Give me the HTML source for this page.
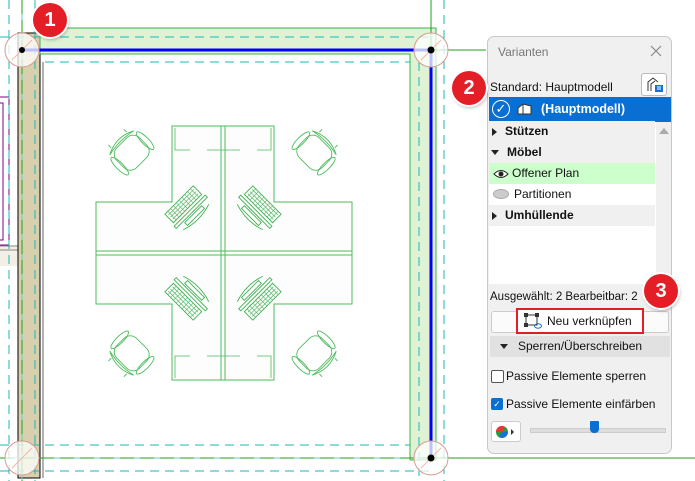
<!DOCTYPE html>
<html><head><meta charset="utf-8"><style>
body{margin:0;width:695px;height:481px;overflow:hidden;background:#fff;font-family:"Liberation Sans",sans-serif;position:relative}
.p{position:absolute}
.panel{left:487px;top:36px;width:185px;height:418px;background:#f0f0f0;border:1px solid #c8c8c8;border-radius:7px;box-sizing:border-box;font-size:12px;color:#111}
.row{position:absolute;left:1px;width:166px;height:21px;line-height:21px}
.b{font-weight:bold}
.tri{display:inline-block;width:0;height:0;border-top:4px solid transparent;border-bottom:4px solid transparent;border-left:5px solid #222;margin:0 8px 0 3px;vertical-align:-1px}
.trid{display:inline-block;width:0;height:0;border-left:4px solid transparent;border-right:4px solid transparent;border-top:5px solid #222;margin:0 8px 0 2px;vertical-align:1px}
.badge{position:absolute;width:34px;height:34px;border-radius:50%;background:#e41e26;color:#fff;font-weight:bold;font-size:20px;text-align:center;line-height:34px;box-shadow:0 0 0 2px #fff,1px 2px 4px rgba(0,0,0,.4)}
</style></head><body>
<svg class="p" style="left:0;top:0" width="695" height="481">
<defs>
<g id="chair" fill="none" stroke="#4cbb5c" stroke-width="0.9">
<rect x="-16" y="-13" width="32" height="28" rx="9"/>
<path d="M-17 -13Q0 -22 17 -13Q0 -17 -17 -13Z"/>
<ellipse cx="-18" cy="2" rx="3.5" ry="12"/><ellipse cx="18" cy="2" rx="3.5" ry="12"/>
<line x1="-11" y1="-17" x2="-11" y2="-21"/><line x1="11" y1="-17" x2="11" y2="-21"/>
</g>
<g id="pc" fill="none" stroke="#3fb050" stroke-width="0.9">
<rect x="-20" y="-7" width="40" height="12"/>
<path d="M-18 -4H18M-18 -1H18M-18 2H18" stroke-width="0.6"/>
<path d="M-16 -7V5M-12 -7V5M-8 -7V5M-4 -7V5M0 -7V5M4 -7V5M8 -7V5M12 -7V5M16 -7V5" stroke-width="0.5"/>
<rect x="-22" y="8" width="44" height="3"/>
<rect x="-12" y="13" width="24" height="4"/>
<path d="M-18 17Q0 23 18 17"/>
</g>
<g id="q">
<use href="#chair" transform="translate(131,152) rotate(-45)"/>
<use href="#pc" transform="translate(184,205) rotate(-45)"/>
</g>
</defs>
<rect x="0" y="246" width="18" height="20" fill="#f3efe6"/>
<path d="M0 97H9V245H0M0 103H3V240H0" fill="none" stroke="#800080" stroke-width="1"/>
<path d="M0 246H18M0 250H18" stroke="#888" stroke-width="1"/>
<rect x="18" y="33" width="22" height="445" fill="#d8d0ac" stroke="#000" stroke-width="1"/>
<line x1="43" y1="62" x2="43" y2="478" stroke="#666" stroke-width="1"/>
<path d="M40 28H436V460H410V54H40Z" fill="#dff2d4" stroke="#3cb24c" stroke-width="1"/>
<g stroke="#19b8b8" stroke-width="1" stroke-dasharray="9,6" fill="none">
<path d="M0 37H430M45 62H410M0 445H410M0 471H430M9 0V481M35 0V481M419 62V481M444 0V481"/>
</g>
<g stroke="#6cc" stroke-width="1"><path d="M22 0V481M0 458H430"/></g>
<g stroke="#1aa31a" stroke-width="1"><path d="M22 0V481M0 458H430" stroke-dasharray="14,6"/><path d="M431 0V50M431 50H486M431 458H695"/></g>
<g fill="#fdfdfd" stroke="#4cbb5c" stroke-width="1">
<path d="M172 126H274V202H352V304H274V380H172V304H96V202H172Z"/>
<path d="M221 126V380M225 126V380M96 251H352M96 255H352" fill="none"/>
<path d="M175 128V150H190M207 150H240M257 150H271V128M175 378V356H190M207 356H240M257 356H271V378" fill="none" stroke-width="0.8"/>
</g>
<use href="#q"/>
<use href="#q" transform="translate(446,0) scale(-1,1)"/>
<use href="#q" transform="translate(0,506) scale(1,-1)"/>
<use href="#q" transform="translate(446,506) scale(-1,-1)"/>
<path d="M22 50H431V458" fill="none" stroke="#0000ff" stroke-width="3"/>
<g fill="rgba(255,255,255,.75)" stroke="#d89c90" stroke-width="1">
<circle cx="22" cy="50" r="17"/><circle cx="431" cy="50" r="17"/><circle cx="22" cy="458" r="17"/><circle cx="431" cy="458" r="17"/>
</g>
<g stroke="#f0b8a8" stroke-width="1"><path d="M12 60L32 40M421 60L441 40M12 468L32 448M421 468L441 448"/></g>
<circle cx="22" cy="50" r="3" fill="#000"/><circle cx="431" cy="50" r="3.5" fill="#000"/><circle cx="431" cy="458" r="3.5" fill="#000"/>
</svg>

<div class="panel p">
<div class="p" style="left:10px;top:8px;color:#777;font-size:12px">Varianten</div>
<svg class="p" style="right:9px;top:8px" width="12" height="12"><path d="M1 1L11 11M11 1L1 11" stroke="#888" stroke-width="1.2"/></svg>
<div class="p" style="left:2px;top:43px;font-size:12px">Standard: Hauptmodell</div>
<div class="p" style="left:153px;top:36px;width:24px;height:21px;background:#fff;border:1px solid #bbb;border-radius:3px"><svg width="24" height="21"><path d="M6 17V8l5-4 5 4M9 17V10l4-3" fill="none" stroke="#333"/><rect x="13" y="11" width="8" height="7" fill="#1d6fd6"/><path d="M15 13h4M15 15h4" stroke="#fff"/></svg></div>
<div class="p" style="left:1px;top:60px;width:182px;height:25px;background:#0a6fd2;color:#fff">
<div class="p" style="left:3px;top:3px;width:16px;height:16px;border:1.5px solid #fff;border-radius:50%;font-size:13px;line-height:16px;text-align:center">✓</div>
<svg class="p" style="left:28px;top:6px" width="16" height="12"><path d="M1 11V5l5-4 8 2v8zM6 1v10" fill="#fff" stroke="#333" stroke-width="1"/></svg>
<div class="p b" style="left:52px;top:5px;font-size:12.5px">(Hauptmodell)</div>
</div>
<div class="p" style="left:1px;top:85px;width:167px;height:162px;background:#fff"></div>
<div class="p" style="left:168px;top:85px;width:15px;height:162px;background:#f0f0f0"><div style="margin:6px 0 0 3px;width:0;height:0;border-left:5px solid transparent;border-right:5px solid transparent;border-bottom:6px solid #aaa"></div></div>
<div class="row b" style="top:84px;background:#f0f0f0"><span class="tri"></span>Stützen</div>
<div class="row b" style="top:105px;background:#f0f0f0"><span class="trid"></span>Möbel</div>
<div class="row" style="top:126px;background:#ccffcc"><svg style="margin:0 3px 0 4px;vertical-align:-2px" width="16" height="10"><path d="M1 5Q8 -2 15 5Q8 12 1 5Z" fill="#fff" stroke="#222"/><circle cx="8" cy="5" r="2.5" fill="#222"/></svg>Offener Plan</div>
<div class="row" style="top:147px"><span style="display:inline-block;width:14px;height:8px;border-radius:50%;background:#ccc;border:1px solid #aaa;margin:0 5px 0 4px;vertical-align:-1px"></span>Partitionen</div>
<div class="row b" style="top:168px;background:#f0f0f0"><span class="tri"></span>Umhüllende</div>
<div class="p" style="left:2px;top:254px;font-size:11.5px">Ausgewählt: 2 Bearbeitbar: 2</div>
<div class="p" style="left:3px;top:274px;width:176px;height:20px;background:#fbfbfb;border:1px solid #ccc;border-radius:3px"></div>
<div class="p" style="left:28px;top:271px;width:124px;height:22px;border:2px solid #e41e26;background:#fff"><svg class="p" style="left:6px;top:3px" width="18" height="16"><rect x="2" y="2" width="11" height="10" fill="none" stroke="#333"/><rect x="0" y="0" width="4" height="4" fill="#333"/><rect x="11" y="0" width="4" height="4" fill="#333"/><rect x="0" y="10" width="4" height="4" fill="#333"/><ellipse cx="14" cy="13" rx="3.5" ry="2.2" fill="none" stroke="#1d6fd6"/></svg><div class="p" style="left:29px;top:4px;font-size:12px">Neu verknüpfen</div></div>
<div class="p" style="left:2px;top:299px;width:180px;height:21px;background:#e1e1e1;line-height:21px"><span class="trid" style="margin-left:10px;margin-right:10px"></span>Sperren/Überschreiben</div>
<div class="p" style="left:3px;top:333px;width:11px;height:11px;border:1px solid #555;border-radius:2px;background:#fff"></div>
<div class="p" style="left:18px;top:332px">Passive Elemente sperren</div>
<div class="p" style="left:3px;top:361px;width:12px;height:12px;border-radius:2px;background:#0a6fd2;color:#fff;font-size:9px;text-align:center;line-height:12px">✓</div>
<div class="p" style="left:18px;top:360px">Passive Elemente einfärben</div>
<div class="p" style="left:3px;top:384px;width:28px;height:19px;background:#fff;border:1px solid #ccc;border-radius:3px"><svg width="28" height="19"><circle cx="10" cy="10" r="6" fill="#2a9a3a"/><path d="M10 10L16 10A6 6 0 0 1 7 15Z" fill="#1d6fd6"/><path d="M10 10L4 10A6 6 0 0 1 13 4.8Z" fill="#e33"/><path d="M19 7l3 3-3 3z" fill="#333"/></svg></div>
<div class="p" style="left:42px;top:391px;width:134px;height:3px;background:#ddd;border:1px solid #ccc"></div>
<div class="p" style="left:102px;top:384px;width:9px;height:12px;background:#0a6fd2;border-radius:1px 1px 4px 4px"></div>
</div>

<div class="badge" style="left:33px;top:3px">1</div>
<div class="badge" style="left:452px;top:71px">2</div>
<div class="badge" style="left:644px;top:274px">3</div>
</body></html>
